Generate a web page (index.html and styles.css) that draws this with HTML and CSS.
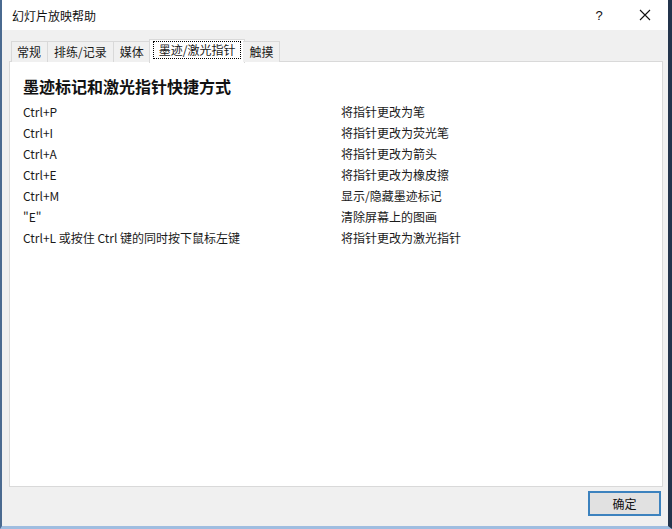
FILE: index.html
```html
<!DOCTYPE html>
<html lang="zh-CN">

<head>
  <meta charset="UTF-8">
  <title>幻灯片放映帮助</title>
  <link rel="stylesheet" href="styles.css">
</head>

<body>
  <div class="window">
    <div class="titlebar">
      <span class="title">幻灯片放映帮助</span>
      <div class="controls">
        <span class="ctl">?</span>
        <span class="ctl">
          <svg width="12" height="12" viewBox="0 0 12 12"><path d="M1 1 L11 11 M11 1 L1 11" stroke="#111" stroke-width="1.1" fill="none"/></svg>
        </span>
      </div>
    </div>

    <div class="body">
      <div class="tabs">
        <div class="tab">常规</div>
        <div class="tab">排练/记录</div>
        <div class="tab">媒体</div>
        <div class="tab active"><span class="focus">墨迹/激光指针</span></div>
        <div class="tab">触摸</div>
      </div>

      <div class="panel">
        <h2 class="heading">墨迹标记和激光指针快捷方式</h2>
        <div class="keys">
          <div>Ctrl+P</div><div>将指针更改为笔</div>
          <div>Ctrl+I</div><div>将指针更改为荧光笔</div>
          <div>Ctrl+A</div><div>将指针更改为箭头</div>
          <div>Ctrl+E</div><div>将指针更改为橡皮擦</div>
          <div>Ctrl+M</div><div>显示/隐藏墨迹标记</div>
          <div>"E"</div><div>清除屏幕上的图画</div>
          <div>Ctrl+L 或按住 Ctrl 键的同时按下鼠标左键</div><div>将指针更改为激光指针</div>
        </div>
      </div>

      <div class="footer">
        <button class="ok">确定</button>
      </div>
    </div>
  </div>
</body>

</html>
```

FILE: styles.css
```css
html,
body {
  margin: 0;
  padding: 0;
  height: 100%;
}

body {
  font-family: "Noto Sans CJK SC", "Liberation Sans", sans-serif;
  font-size: 12px;
  color: #1a1a1a;
  background: #f0f0f0;
}

.window {
  box-sizing: border-box;
  width: 672px;
  height: 529px;
  display: flex;
  flex-direction: column;
  border-left: 2px solid #4a6a90;
  border-right: 4px solid #23344c;
  border-bottom: 3px solid #9fbde0;
  background: #f0f0f0;
}

/* 标题栏 */
.titlebar {
  height: 30px;
  display: flex;
  align-items: center;
  justify-content: space-between;
  background: #fff;
  padding-left: 10px;
}

.title {
  font-size: 12px;
  color: #111;
}

.controls {
  display: flex;
  height: 100%;
}

.ctl {
  width: 46px;
  display: flex;
  align-items: center;
  justify-content: center;
  font-family: "Liberation Sans", sans-serif;
  font-size: 13px;
  color: #111;
}

.body {
  flex: 1;
  display: flex;
  flex-direction: column;
  padding: 11px 5px 0 7px;
}

/* 选项卡 */
.tabs {
  display: flex;
  height: 20px;
  padding-left: 2px;
  position: relative;
  z-index: 1;
}

.tab {
  box-sizing: border-box;
  height: 21px;
  line-height: 19px;
  padding: 0 6px;
  border: 1px solid #d9d9d9;
  border-bottom: none;
  border-left: none;
  background: #f0f0f0;
}

.tab:first-child {
  border-left: 1px solid #d9d9d9;
  padding-left: 5px;
}

.tab.active {
  background: #fff;
  height: 24px;
  margin-top: -2px;
  margin-left: -2px;
  margin-right: -2px;
  padding: 1px 3px 0;
  line-height: 17px;
  border-left: 1px solid #d9d9d9;
}

.focus {
  display: inline-block;
  border: 1px dotted #000;
  padding: 0 5px;
  line-height: 16px;
}

.panel {
  flex: 1;
  background: #fff;
  border: 1px solid #d9d9d9;
  padding: 13px 13px 0;
}

.heading {
  margin: 0 0 4px;
  font-size: 16px;
  line-height: 22px;
  font-weight: bold;
  color: #111;
}

.keys {
  display: grid;
  grid-template-columns: 318px 1fr;
  line-height: 21px;
  font-size: 12px;
}

.footer {
  height: 39px;
  display: flex;
  align-items: flex-start;
  justify-content: flex-end;
  padding: 4px 2px 0 0;
  box-sizing: border-box;
}

.ok {
  width: 73px;
  height: 25px;
  border: 2px solid #3c82be;
  background: #e1e1e1;
  font-family: "Noto Sans CJK SC", sans-serif;
  font-size: 12px;
  color: #111;
  padding: 0;
}
```
